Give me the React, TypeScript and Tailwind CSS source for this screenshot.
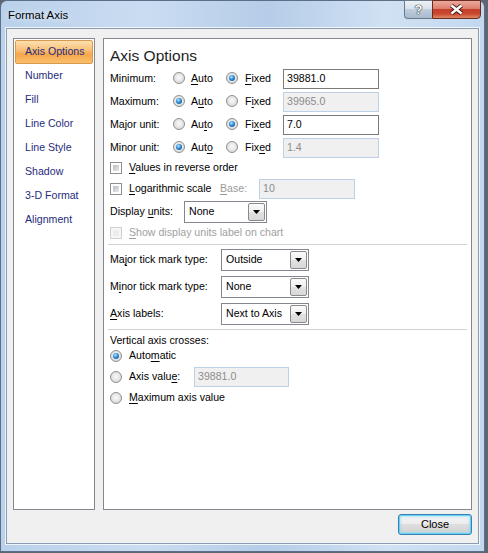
import React from 'react';

const navItems = ['Axis Options', 'Number', 'Fill', 'Line Color', 'Line Style', 'Shadow', '3-D Format', 'Alignment'];

const limits = [
    { label: 'Minimum:', auto: false, value: '39881.0', k: 0 },
    { label: 'Maximum:', auto: true, value: '39965.0', k: 1 },
    { label: 'Major unit:', auto: false, value: '7.0', k: 2 },
    { label: 'Minor unit:', auto: true, value: '1.4', k: 3 },
];

// text with one underlined access key
const Mn: React.FC<{ text: string; at: number }> = ({ text, at }) => (
    <span className="whitespace-nowrap">
        {text.slice(0, at)}
        <span className="underline underline-offset-[1.5px]">{text[at]}</span>
        {text.slice(at + 1)}
    </span>
);

const Radio: React.FC<{ checked?: boolean }> = ({ checked }) => (
    <span className="flex size-[12px] shrink-0 items-center justify-center rounded-full border border-[#8e8f8f] bg-[radial-gradient(circle_at_50%_45%,#fafafa,#e4e4e4_55%,#cdcdcd)]">
        {checked && (
            <span className="size-[6px] rounded-full bg-[radial-gradient(circle_at_40%_35%,#c2e8ff,#2b8ad6_45%,#0b4a8c)]" />
        )}
    </span>
);

const Check: React.FC<{ disabled?: boolean }> = ({ disabled }) => (
    <span className={`size-[12px] shrink-0 border p-[2px] ${disabled ? 'border-[#cfcfcf] bg-[#f6f6f6]' : 'border-[#8e8f8f] bg-white'}`}>
        <span className={`block size-full ${disabled ? 'bg-[#ececec]' : 'bg-[linear-gradient(135deg,#b6bbc2,#e9eaeb)]'}`} />
    </span>
);

const Field: React.FC<{ value: string; disabled?: boolean; className?: string }> = ({ value, disabled, className = '' }) => (
    <div
        className={`flex h-[20px] items-center border px-[3px] ${className} ${
            disabled ? 'border-[#bcd0e6] bg-[#f0f0f0] text-[#8c8c8c]' : 'border-[#7a7a7a] bg-white text-black'
        }`}
    >
        {value}
    </div>
);

const Combo: React.FC<{ value: string; className?: string }> = ({ value, className = '' }) => (
    <div className={`flex h-[22px] items-stretch border border-[#828790] bg-white ${className}`}>
        <span className="flex flex-1 items-center pl-[4px]">{value}</span>
        <span className="m-[1px] flex w-[17px] items-center justify-center rounded-[2px] border border-[#8a8a8a] bg-[linear-gradient(#fbfbfb,#efefef_50%,#e2e2e2_50%,#d8d8d8)]">
            <svg width="7" height="4" viewBox="0 0 7 4">
                <path d="M0 0h7L3.5 4z" fill="#000" />
            </svg>
        </span>
    </div>
);

export default function App() {
    return (
        <div className="h-[553px] w-[488px] bg-[#5d6672] font-['Liberation_Sans',Arial,sans-serif] text-[10.6px] text-black">
            <div className="flex h-[552px] w-[485px] flex-col rounded-t-[7px] border border-[#5c6f86] bg-[linear-gradient(90deg,#b9d1eb,#cadcf1_30%,#b5cde8_55%,#d0e1f3_80%,#c3d8ef)] px-[5px] pb-[7px]">
                {/* Title bar */}
                <div className="flex h-[27px] shrink-0 items-start justify-between">
                    <span className="pl-[2px] pt-[6px] text-[11.4px] [text-shadow:0_0_6px_rgba(255,255,255,0.95)]">Format Axis</span>
                    <div className="-mr-[2px] -mt-[1px] flex">
                        <div className="flex h-[19px] w-[28px] items-center justify-center rounded-bl-[4px] border border-r-0 border-[#6b798c] bg-[linear-gradient(#eef2f6,#d9e2eb_45%,#bfcddc_50%,#a9bace)]">
                            <span className="text-[13px] font-bold leading-none text-white [text-shadow:0_0_1px_#26323f,0_0_1px_#26323f,0_0_1px_#26323f]">?</span>
                        </div>
                        <div className="flex h-[19px] w-[49px] items-center justify-center rounded-br-[4px] border border-[#6b2a22] bg-[linear-gradient(#eba99c,#dc7f6d_45%,#c43f2a_50%,#c9472f_75%,#de8a63)]">
                            <svg width="15" height="11" viewBox="0 0 15 11">
                                <path d="M2.5 1.5L12.5 9.5M12.5 1.5L2.5 9.5" stroke="#3a1712" strokeWidth="4.2" />
                                <path d="M2.5 1.5L12.5 9.5M12.5 1.5L2.5 9.5" stroke="#ffffff" strokeWidth="2.4" />
                            </svg>
                        </div>
                    </div>
                </div>

                {/* Client area */}
                <div className="flex flex-1 flex-col border border-[#8b9cb2] bg-[#f0f0f0] px-[6px] pb-[8px] pt-[9px] shadow-[0_0_0_1px_rgba(255,255,255,0.75)]">
                    <div className="flex h-[472px] gap-[8px]">
                        {/* Category list */}
                        <nav className="w-[82px] border border-[#828790] bg-white px-[1px] pt-[1px]">
                            {navItems.map((item, i) => (
                                <div
                                    key={item}
                                    className={`flex h-[24px] items-center rounded-[2px] border pl-[9px] text-[#1f2c7c] ${
                                        i === 0
                                            ? 'border-[#d99a4e] bg-[linear-gradient(#fde0b0,#f9c17a_40%,#f6a64a_60%,#f9bf6b)]'
                                            : 'border-transparent'
                                    }`}
                                >
                                    {item}
                                </div>
                            ))}
                        </nav>

                        {/* Options pane */}
                        <section className="flex w-[369px] flex-col border border-[#828790] bg-white pt-[5px]">
                            <div className="flex h-[23px] items-center pl-[6px] text-[15.5px] text-[#1e1e1e]">Axis Options</div>

                            {limits.map((row) => (
                                <div key={row.label} className="flex h-[23px] items-center pl-[6px]">
                                    <span className="w-[63px]">{row.label}</span>
                                    <span className="flex w-[53px] items-center gap-[6px]">
                                        <Radio checked={row.auto} />
                                        <Mn text="Auto" at={row.k} />
                                    </span>
                                    <span className="flex w-[57px] items-center gap-[7px]">
                                        <Radio checked={!row.auto} />
                                        <Mn text="Fixed" at={row.k + 1 > 4 ? 4 : row.k === 0 ? 0 : row.k} />
                                    </span>
                                    <Field value={row.value} disabled={row.auto} className="w-[96px]" />
                                </div>
                            ))}

                            <div className="flex h-[18px] items-center gap-[7px] pl-[6px]">
                                <Check />
                                <Mn text="Values in reverse order" at={0} />
                            </div>
                            <div className="flex h-[24px] items-center pl-[6px]">
                                <span className="flex w-[110px] items-center gap-[7px]">
                                    <Check />
                                    <Mn text="Logarithmic scale" at={0} />
                                </span>
                                <span className="w-[39px] text-[#9a9a9a]">
                                    <Mn text="Base:" at={0} />
                                </span>
                                <Field value="10" disabled className="w-[96px]" />
                            </div>
                            <div className="flex h-[22px] items-center pl-[6px]">
                                <span className="w-[74px]">
                                    <Mn text="Display units:" at={8} />
                                </span>
                                <Combo value="None" className="h-[21px] w-[83px]" />
                            </div>
                            <div className="flex h-[20px] items-center gap-[7px] pl-[6px] text-[#a0a0a0]">
                                <Check disabled />
                                <Mn text="Show display units label on chart" at={0} />
                            </div>

                            <div className="mx-[4px] mt-[1px] h-px bg-[#d2d2d2]" />

                            <div className="mt-[4px] flex flex-col gap-[5px] pl-[6px]">
                                <div className="flex h-[22px] items-center">
                                    <span className="w-[111px]">
                                        <Mn text="Major tick mark type:" at={2} />
                                    </span>
                                    <Combo value="Outside" className="w-[88px]" />
                                </div>
                                <div className="flex h-[22px] items-center">
                                    <span className="w-[111px]">
                                        <Mn text="Minor tick mark type:" at={1} />
                                    </span>
                                    <Combo value="None" className="w-[88px]" />
                                </div>
                                <div className="flex h-[22px] items-center">
                                    <span className="w-[111px]">
                                        <Mn text="Axis labels:" at={0} />
                                    </span>
                                    <Combo value="Next to Axis" className="w-[88px]" />
                                </div>
                            </div>

                            <div className="mx-[4px] mt-[4px] h-px bg-[#d2d2d2]" />

                            <div className="mt-[3px] flex flex-col pl-[6px]">
                                <div className="flex h-[16px] items-center">Vertical axis crosses:</div>
                                <div className="flex h-[14px] items-center gap-[7px]">
                                    <Radio checked />
                                    <Mn text="Automatic" at={4} />
                                </div>
                                <div className="flex h-[28px] items-center">
                                    <span className="flex w-[84px] items-center gap-[7px]">
                                        <Radio />
                                        <Mn text="Axis value:" at={9} />
                                    </span>
                                    <Field value="39881.0" disabled className="h-[19px] w-[95px]" />
                                </div>
                                <div className="flex h-[14px] items-center gap-[7px]">
                                    <Radio />
                                    <Mn text="Maximum axis value" at={0} />
                                </div>
                            </div>
                        </section>
                    </div>

                    <div className="mt-[4px] flex justify-end">
                        <button className="flex h-[21px] w-[74px] items-center justify-center rounded-[3px] border border-[#3c7fb1] bg-[linear-gradient(#f4f4f4,#ececec_50%,#dedede_50%,#d2d2d2)] text-[11px] shadow-[inset_0_0_0_1px_#62d2f6,inset_0_0_2px_2px_rgba(120,215,250,0.45)]">
                            Close
                        </button>
                    </div>
                </div>
            </div>
        </div>
    );
}
